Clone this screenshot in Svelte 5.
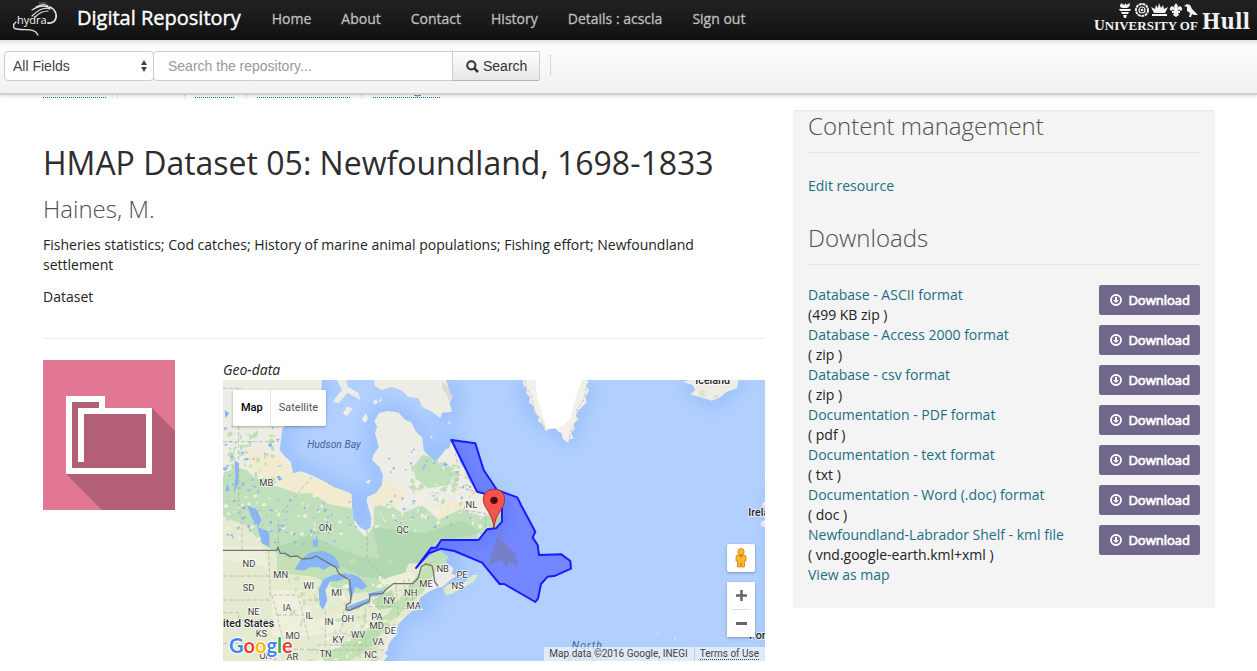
<script>
  const navItems = ['Home', 'About', 'Contact', 'History', 'Details : acscla', 'Sign out'];

  const downloads = [
    { name: 'Database - ASCII format', info: '(499 KB zip )' },
    { name: 'Database - Access 2000 format', info: '( zip )' },
    { name: 'Database - csv format', info: '( zip )' },
    { name: 'Documentation - PDF format', info: '( pdf )' },
    { name: 'Documentation - text format', info: '( txt )' },
    { name: 'Documentation - Word (.doc) format', info: '( doc )' },
    { name: 'Newfoundland-Labrador Shelf - kml file', info: '( vnd.google-earth.kml+xml )', map: true }
  ];

  const regions = [
    ['MB', 133, 379], ['NL', 748, 445], ['ON', 310, 514], ['QC', 542, 520],
    ['ND', 81, 622], ['MN', 176, 653], ['SD', 80, 694], ['WI', 260, 688],
    ['NE', 95, 764], ['IA', 195, 752], ['IL', 262, 776], ['MI', 344, 709],
    ['IN', 321, 794], ['OH', 377, 785], ['KS', 118, 832], ['MO', 212, 836],
    ['KY', 349, 848], ['WV', 408, 833], ['PA', 465, 779], ['MD', 464, 806],
    ['DE', 505, 821], ['VA', 468, 854], ['NC', 446, 893], ['TN', 311, 890],
    ['NY', 502, 731], ['NH', 566, 709], ['MA', 575, 746], ['ME', 612, 682],
    ['NB', 662, 635], ['PE', 720, 653], ['NS', 707, 688], ['OK', 130, 898], ['AR', 211, 899]
  ];

  // Small terrain flecks, scattered with a fixed seed so the map is stable.
  let seed = 41;
  const rnd = () => {
    seed = (seed * 16807) % 2147483647;
    return seed / 2147483647;
  };
  function flecks(count, x0, y0, w, h, size) {
    let d = '';
    for (let i = 0; i < count; i++) {
      const x = Math.round(x0 + rnd() * w);
      const y = Math.round(y0 + rnd() * h);
      const a = Math.round(3 + rnd() * size);
      const b = Math.round(2 + rnd() * size * 0.7);
      const c = Math.round(rnd() * a);
      d += `M${x} ${y}l${a} ${-c / 2}l${c} ${b}l${-a} ${b}l${-c} ${-b / 2}z`;
    }
    return d;
  }
  const lakes = flecks(65, 3, 190, 170, 340, 5) + flecks(35, 150, 400, 250, 160, 4) + flecks(40, 480, 250, 300, 250, 4);
  const tundra = flecks(90, 3, 400, 790, 135, 7);
  const forest = flecks(55, 3, 210, 150, 160, 11) + flecks(45, 560, 300, 170, 130, 14);
  const fields = flecks(80, 150, 640, 400, 260, 10);
  const woods = flecks(70, 180, 600, 360, 300, 12);
  const snow = flecks(45, 560, 370, 220, 90, 11);

  const land =
    'M3 60H300L298 90L250 150L200 190L181 205L173 270L188 288L206 305L213 340L238 334L275 348L310 366L335 382L370 394L388 402L390 440L393 475L412 500L430 511L446 503L448 475L441 448L434 425L436 410L462 400L480 376L483 345L472 320L450 300L454 284L470 262L465 240L459 218L465 200L457 182L472 158L500 153L530 158L550 180L568 187L580 212L602 235L605 272L621 287L640 306L661 282L670 268L682 263L688 242L705 275L715 310L731 330L740 360L766 396L800 399L822 415L839 440L842 480L824 500L795 510L770 535L660 538L630 563L582 622L618 594L650 570L678 590L670 606L694 624L689 641L706 648L688 658L662 680L646 683L620 695L594 713L586 735L604 748L570 752L540 780L527 794L523 826L510 838L500 852L496 872L487 878L498 888L484 903H3Z';
</script>

<div class="topbar">
  <a class="hydra" href="#hydra" aria-label="hydra">
    <svg viewBox="0 0 46 36" width="46" height="36">
      <g fill="none" stroke="#e4e4e4" stroke-linecap="round">
        <path d="M38 5C47 9 46 22 36 21" stroke-width="1.8" />
        <path d="M20 8C26 4 33 3 38 6M24 5C29 2 33 2 36 4M20 14C26 8 33 5 38 7M23 15C28 10 32 9 36 9" stroke-width="1.2" />
        <path d="M27 1H34" stroke-width=".8" stroke="#888" />
        <path d="M4 20C1 22 0 27 5 27C13 29 22 25 26 33" stroke-width="1.3" />
      </g>
      <text x="5" y="22" font-size="11" fill="#f3f3f3">hydra</text>
    </svg>
  </a>
  <a class="brand" href="#top">Digital Repository</a>
  <nav aria-label="Main">
    {#each navItems as item}
      <a href="#nav">{item}</a>
    {/each}
  </nav>
  <a class="hull" href="#hull">
    <span class="uni">
      <svg viewBox="0 0 80 15" width="80" height="15" fill="#f2f2f2">
        <path d="M1 6H13L12 8H2ZM3 9H11L10 11H4ZM5 12H9L8 15H6ZM4 5C0 3 3 2 3 0L6 2L8 0L8 2L12 0C11 3 13 3 9 5Z" />
        <g fill="none" stroke="#f2f2f2">
          <circle cx="24" cy="7" r="6" stroke-width="2" stroke-dasharray="2.8 .7" />
          <circle cx="24" cy="7" r="3" stroke-width="1.2" />
        </g>
        <circle cx="24" cy="7" r="1.3" />
        <path d="M33 4L37 6L38 2L40 5L41 0L43 5L45 2L46 6L50 4L47 10H36ZM34 11H49V13H34Z" />
        <path d="M58 0L60 3L59 6C61 1 65 4 64 7L62 8L61 6L60 8H62V10H60L61 12L58 14L55 12L56 10H54V8H56L55 6L54 8L52 7C51 4 55 1 57 6L56 3Z" />
        <path d="M66 3L69 1L72 2L74 6L80 12H76L74 11L73 14H71L72 10L69 8L69 4Z" />
      </svg>
      <span class="caps">U<small>NIVERSITY OF</small></span>
    </span>
    <strong>Hull</strong>
  </a>
</div>

<form class="searchbar" onsubmit={(e) => e.preventDefault()}>
  <div class="pick">
    <select aria-label="Search field"><option>All Fields</option></select>
    <svg viewBox="0 0 6 12" width="6" height="12" fill="#444"><path d="M3 0L6 5H0ZM3 12L0 7H6Z" /></svg>
  </div>
  <input type="text" aria-label="Search the repository" placeholder="Search the repository..." />
  <button class="go" type="submit">
    <svg viewBox="0 0 13 13" width="13" height="13" fill="none" stroke="#333"><circle cx="5.3" cy="5.3" r="4.1" stroke-width="2" /><path d="M8.3 8.3L12 12" stroke-width="2.5" /></svg>
    Search
  </button>
  <span class="tick"></span>
</form>

<div class="crumbs">
  <svg viewBox="0 0 400 4" width="400" height="4" fill="none">
    <g stroke="#1b6e83" stroke-dasharray="1 1">
      <path d="M0 2.5H63M152 2.5H191M214 2.5H307M330 2.5H397" />
    </g>
    <path d="M74.5 0V3M141.5 0V3M203.5 0V3M318.5 0V3" stroke="#bbb" stroke-dasharray="1 1" />
    <path d="M371 0Q374.5 2 378 0" stroke="#1b7c93" />
  </svg>
</div>

<main>
  <article>
    <h1>HMAP Dataset 05: Newfoundland, 1698-1833</h1>
    <h2>Haines, M.</h2>
    <p>Fisheries statistics; Cod catches; History of marine animal populations; Fishing effort; Newfoundland settlement</p>
    <p>Dataset</p>
    <hr />
    <div class="media">
      <svg class="thumb" viewBox="0 0 132 150" width="132" height="150">
        <path fill="#e27794" d="M0 0H132V150H0Z" />
        <path fill="#b35f76" d="M109 48L132 71V150H59L23 114V36H62V48Z" />
        <path fill="#fff" fill-rule="evenodd" d="M23 36H62V48H109V114H23ZM29 42V108H103V54H41V102H35V48H56V42Z" />
      </svg>
      <figure>
        <figcaption>Geo-data</figcaption>
        <div class="map">
          <svg class="terrain" viewBox="3 60 1626 843" preserveAspectRatio="xMidYMid slice">
            <defs>
              <clipPath id="land"><path d={land} /></clipPath>
              <filter id="soft" x="-20%" y="-20%" width="140%" height="140%"><feGaussianBlur stdDeviation="26" /></filter>
            </defs>
            <path fill="#b1d0ff" d="M3 60H1629V903H3Z" />
            <g fill="none" stroke="#8ab4f8" stroke-width="46" opacity=".65" filter="url(#soft)">
              <path d={land} />
              <path d="M900 60L935 160L1040 230L1100 60M1390 60L1470 120L1560 60M690 60L690 150L640 180M1660 380V903" />
            </g>

            <g clip-path="url(#land)">
              <path fill="#eeede5" d="M3 60H900V903H3Z" />
              <path fill="#f2ebcf" d="M70 262L120 275L180 290L215 340L300 362L390 398V445L280 430L160 370L90 330ZM450 395L500 360L520 385L550 390L540 430L450 440ZM740 380L790 400L780 420L735 400ZM640 440L740 410L760 430L650 480Z" />
              <path fill="#c0e0bb" d="M3 345L40 320L75 330L110 365L170 380L225 400L270 400L320 432L390 445L400 500L430 530L455 500V440L500 430L540 460L600 435L650 480L720 445L780 470L850 440V540L600 640L520 720L460 903H3Z" />
              <path fill="#b2d8b1" d="M170 560L260 525L350 565L420 590L600 610L520 665L420 650L360 620L280 600L200 610ZM450 500L610 520L720 480L780 520L640 545L580 620L480 620Z" />
              <path fill="#c0e0bb" d="M575 320L600 285L640 290L665 330L700 335L680 375L620 385L580 355Z" />
              <path fill="#e4ebd0" d="M3 470L70 495L120 550L165 580L175 640L280 650L330 680L400 700L500 690L540 660L560 610L620 610L600 780L500 810L480 903H3Z" />
              <path fill="#eef0db" d="M150 690L240 690L280 780L360 760L350 820L150 830ZM470 660L560 635L590 655L500 690ZM3 560L120 560L140 620L3 600Z" />
              <path fill="#c4e1b4" d="M165 590L260 590L290 650L220 640L165 640ZM300 880L380 840L440 800L500 760L560 680L620 600L650 620L600 700L500 790L440 870L380 903H300Z" />
              <path fill="#b8dcae" d="M400 850L480 780L470 830L410 880ZM450 720L510 690L525 740L470 750Z" />
              <path fill="#bfe0b7" d={forest} />
              <path fill="#eeefe1" d={tundra} />
              <path fill="#f1efe6" d={snow} />
              <path fill="#f0f2df" d={fields} />
              <path fill="#c2e0b3" opacity=".8" d={woods} />
              <path fill="#8ab4f8" d={lakes} />
              <path fill="#8ab4f8" d="M38 300L50 310V370L36 400L40 350ZM75 435L105 450L118 480L110 500L90 475ZM106 500L142 515V562L120 550ZM15 370L23 390L12 396ZM272 540L288 538V560H273ZM8 150L22 160L10 175Z" />
              <path fill="#8ab4f8" d="M218 628L236 600L262 578L300 572L330 584L346 600L355 628L345 624L325 618L305 630L290 622L266 622L245 632ZM290 690L302 660L330 646L372 640L388 652L362 658L345 664L325 664L310 690L316 720L303 750L293 735ZM380 640L410 650L436 678L420 690L400 680L388 720L378 690L384 665ZM372 742L400 730L440 715V725L410 745L380 754ZM438 700L485 690L480 705L442 712Z" />
            </g>

            <g fill="#eeede5">
              <path d="M345 60L360 90L332 125L350 130L377 98L415 120L410 100L378 80L372 60ZM362 160L376 140L393 145L375 168ZM420 175L432 160L438 174L432 188L423 184ZM452 125L462 118L468 126L458 134ZM470 125L480 110L478 125ZM458 78L480 90L510 80L540 92L558 110L590 115L600 140L630 155L655 175L660 158L690 155L683 130L690 110L680 85L672 60H457ZM676 186L686 185L684 194ZM624 230L632 226L630 236ZM430 365L448 358L440 372Z" />
              <path fill="#ccc" d="M660 65L685 88L688 105L682 125L672 100L662 90Z" opacity=".6" />
            </g>
            <path fill="#dcebcf" d="M664 685L680 672L720 674L752 645L768 645L755 665L690 702L670 706ZM700 638L735 645L725 650L705 648Z" />
            <path fill="#f2f0ea" d="M902 60L906 80L914 84L912 98L924 112L922 128L935 138L938 158L950 170L948 184L962 192L970 213L986 206L1000 205L1010 216L1018 218L1022 236L1040 250L1042 238L1055 235L1048 220L1058 206L1056 190L1070 180L1062 166L1070 150L1078 144L1094 125L1090 112L1102 90L1092 80L1100 66L1095 60Z" />
            <path fill="#fff" d="M940 60L945 110L960 160L975 205L1005 205L1025 195L1045 175L1060 115L1080 60Z" />
            <path fill="none" stroke="#bfbfb8" stroke-width="4" stroke-dasharray="5 4 2 6" d="M908 60L915 90L930 110L936 150L960 185L970 212M1096 70L1085 120L1064 150L1066 182L1048 210L1040 245" />
            <path fill="#eeede5" d="M1384 66L1400 60H1550L1545 85L1515 95L1495 112L1470 122L1435 112L1404 103L1420 90L1412 75Z" />
            <path fill="#d6e8c4" d="M1430 90L1450 92L1450 112L1430 105ZM1470 112L1490 100L1486 115Z" />
            <path fill="#eeede5" d="M1629 425L1620 430L1622 440H1629ZM1629 480L1615 488L1620 500H1629Z" />
            <path fill="#f4f6d8" d="M1305 819h6v3h-6zM1356 834h6v3h-6z" />

            <g fill="none" stroke="#a9ada5" stroke-width="2" stroke-dasharray="12 6">
              <path d="M3 85H60M50 198V435L60 480V570M3 245H172M270 350L190 445L168 480V565M435 510V600L500 665M3 648H145M3 720H145M140 570L145 705H228M3 758H50V780H158M150 705L165 765L180 825M165 765H240M180 825L170 868H290M228 705L240 750L260 840M240 720H295M310 752V850M365 752L362 800L330 850M365 750H380M440 740H515M430 742V790L400 830L360 820M440 795H520M285 855H490M260 870H485M520 665L525 720L530 765M545 660L555 735M560 655L575 730M760 395L735 420L725 450L790 460V505M700 280L710 330L705 380L760 395" />
              <path d="M620 610L640 605L655 620M545 745H590M3 850H160V903" />
            </g>
            <path fill="none" stroke="#707570" stroke-width="4" stroke-linejoin="round" d="M3 571H165L168 562L175 580L190 580L205 590L225 588L240 597L268 595L282 588L342 622L350 640L382 660L388 700L385 728L373 735L372 748L380 752L442 725L444 704L483 700L490 690L514 671H572L588 655L598 620L610 612L630 617L635 640L638 665L648 678" />

            <g class="state">
              {#each regions as [label, x, y]}
                <text {x} {y}>{label}</text>
              {/each}
            </g>
            <text class="water" x="336" y="265">Hudson Bay</text>
            <text class="water ocean" x="1096" y="868">North</text>
            <text class="water ocean pale" x="1098" y="908">Atlantic</text>
            <text class="country" x="3" y="801">ited States</text>
            <text class="country" x="1420" y="71">Iceland</text>
            <text class="country" x="1579" y="468">Ireland</text>
            <text class="country" x="1581" y="838">Portugal</text>

            <path fill="#b5d0b0" d="M804 510L825 480L842 440L838 485L822 505Z" />
            <path fill="#b5c3ad" d="M804 618L806 590L812 570L820 545L834 510L842 502L832 540L850 550L862 565L884 585L878 592L888 604L885 630L878 612L868 612L860 605L856 622L846 615L838 602L820 606Z" />
            <path
              fill="#0000ff" fill-opacity=".35" stroke="#1a1aff" stroke-width="6" stroke-linejoin="round"
              d="M688 240L760 250L785 330L825 390L886 412L897 435L940 515L932 533L947 555L951 585L1018 583L1045 603L1047 626L1000 647L977 650L957 672L948 716L940 726L847 672H833L780 608L697 573L658 566L620 580L582 624L628 563H643L658 540H770L795 508L822 505L840 485V430L825 410L765 395Z"
            />
            <path fill="#f5544d" stroke="#a92f2b" stroke-width="3" d="M816 504C813 475 802 460 793 445C776 420 783 388 816 388C849 388 856 420 839 445C830 460 819 475 816 504Z" />
            <circle cx="816" cy="421" r="11" fill="#4c0d0b" />

            <g class="google">
              <text x="21" y="880"><tspan fill="#4285f4">G</tspan><tspan fill="#ea4335">o</tspan><tspan fill="#fbbc05">o</tspan><tspan fill="#4285f4">g</tspan><tspan fill="#34a853">l</tspan><tspan fill="#ea4335">e</tspan></text>
            </g>
          </svg>

          <div class="kind">
            <button class="on" type="button">Map</button>
            <button type="button">Satellite</button>
          </div>
          <div class="tools">
            <button class="peg" type="button" aria-label="Street View">
              <svg viewBox="0 0 12 20" width="12" height="20" fill="#fbb829" stroke="#c98216" stroke-width=".8">
                <path d="M3 7H9Q11 7 11 9V13H9.500V19H6.500V15H5.500V19H2.500V13H1V9Q1 7 3 7Z" />
                <circle cx="6" cy="3.800" r="3.200" /><path fill="#e8711c" stroke="none" d="M4 7.500H8L6 10Z" />
              </svg>
            </button>
            <div class="zoom">
              <button type="button" aria-label="Zoom in"><svg viewBox="0 0 11 11" width="11" height="11"><path stroke="#666" stroke-width="2.5" d="M0 5.500H11M5.500 0V11" /></svg></button>
              <i></i>
              <button type="button" aria-label="Zoom out"><svg viewBox="0 0 11 11" width="11" height="11"><path stroke="#666" stroke-width="3" d="M0 5.500H11" /></svg></button>
            </div>
          </div>
          <div class="credit"><span>Map data ©2016 Google, INEGI</span><span><a href="#terms">Terms of Use</a></span></div>
        </div>
      </figure>
    </div>
  </article>

  <aside>
    <h2>Content management</h2>
    <p><a href="#edit">Edit resource</a></p>
    <h2>Downloads</h2>
    <ul>
      {#each downloads as file}
        <li>
          <div>
            <a href="#file">{file.name}</a><br />{file.info}
            {#if file.map}<br /><a href="#map">View as map</a>{/if}
          </div>
          <button class="download" type="button">
            <svg viewBox="0 0 12 12" width="12" height="12"><circle cx="6" cy="6" r="5" fill="none" stroke="#fff" stroke-width="1.8" /><path fill="#fff" d="M5 3H7V6H9L6 9L3 6H5Z" /></svg>
            <span>Download</span>
          </button>
        </li>
      {/each}
    </ul>
  </aside>
</main>

<style>
  :global(body) {
    margin: 0;
    background: #fff;
    color: #222;
    font: 14px/20px 'Open Sans', sans-serif;
  }
  a {
    color: #1b6e83;
    text-decoration: none;
  }
  svg {
    display: block;
    flex: none;
  }

  .topbar {
    display: flex;
    align-items: center;
    height: 40px;
    padding: 0 7px 0 12px;
    background: linear-gradient(#222, #111);
    box-sizing: border-box;
  }
  .hydra text {
    font-family: 'Open Sans', sans-serif;
  }
  .brand {
    margin: 0 16px 4px 19px;
    color: #fff;
    font-size: 20px;
    -webkit-text-stroke: 0.4px #fff;
  }
  nav {
    display: flex;
    flex: 1;
  }
  nav a {
    padding: 0 15px 2px;
    color: #bfbfbf;
    -webkit-text-stroke: 0.3px #bfbfbf;
  }
  .hull {
    display: flex;
    align-items: flex-end;
    align-self: flex-start;
    gap: 4px;
    padding-top: 3px;
    color: #f2f2f2;
    font-family: 'DejaVu Serif Condensed', 'DejaVu Serif', serif;
  }
  .uni {
    display: flex;
    flex-direction: column;
    align-items: flex-end;
  }
  .caps {
    font: bold 15px/14px 'Liberation Serif', serif;
  }
  .caps small {
    font-size: 13px;
  }
  .hull strong {
    font-size: 22px;
    line-height: 24px;
  }

  .searchbar {
    position: relative;
    display: flex;
    align-items: flex-start;
    height: 55px;
    padding: 11px 4px 0;
    border-bottom: 2px solid #d0d0d0;
    background: linear-gradient(#e4e4e4, #fdfdfd 6px, #f1f1f1);
    box-shadow: 0 1px 4px rgba(0, 0, 0, 0.15);
    box-sizing: border-box;
  }
  .searchbar select,
  .searchbar input,
  .go {
    height: 30px;
    margin: 0;
    border: 1px solid #ccc;
    background: #fff;
    color: #444;
    font: 14px/20px 'Liberation Sans', Arial, sans-serif;
    box-sizing: border-box;
  }
  .pick {
    position: relative;
  }
  .pick select {
    display: block;
    width: 150px;
    padding: 0 8px;
    border-radius: 4px;
    appearance: none;
  }
  .pick svg {
    position: absolute;
    top: 9px;
    right: 7px;
    pointer-events: none;
  }
  .searchbar input {
    width: 300px;
    margin-left: -1px;
    padding: 0 14px;
    border-radius: 4px 0 0 4px;
  }
  .searchbar input::placeholder {
    color: #999;
    opacity: 1;
  }
  .searchbar .go {
    display: flex;
    align-items: center;
    gap: 4px;
    width: 88px;
    margin-left: -1px;
    padding: 0 13px;
    border-color: #ccc #ccc #b3b3b3;
    border-radius: 0 2px 2px 0;
    background: linear-gradient(#fff, #e6e6e6);
    color: #333;
  }
  .tick {
    height: 20px;
    margin: 4px 0 0 10px;
    border-left: 1px dotted #bbb;
  }
  .crumbs {
    position: relative;
    height: 15px;
    padding-left: 43px;
  }

  main {
    display: grid;
    grid-template-columns: 722fr 422fr;
    gap: 28px;
    align-items: start;
    padding: 0 42px 10px 43px;
  }
  h1,
  h2 {
    margin: 0;
    font-weight: 400;
  }
  h1 {
    padding-top: 33px;
    color: #2d2d2d;
    font-size: 32px;
    line-height: 40px;
  }
  h2 {
    color: #505050;
    font-size: 24px;
    font-weight: 300;
    line-height: 32px;
  }
  article h2 {
    margin: 10px 0;
  }
  article p {
    margin: 0 0 12px;
  }
  hr {
    margin: 31px 0 21px;
    border: 0;
    border-top: 1px solid #eee;
  }
  .media {
    display: flex;
    align-items: flex-start;
    gap: 48px;
  }
  figure {
    flex: 1;
    min-width: 0;
    margin: 0;
  }
  figcaption {
    font-style: italic;
  }

  .map {
    position: relative;
    height: 281px;
    overflow: hidden;
    font: 11px/14px Roboto, sans-serif;
  }
  .terrain {
    width: 100%;
    height: 100%;
  }
  .terrain text {
    font-family: Roboto, sans-serif;
  }
  .state text {
    fill: #3c3c3c;
    font-size: 28px;
    text-anchor: middle;
    paint-order: stroke;
    stroke: rgba(255, 255, 255, 0.75);
    stroke-width: 5px;
  }
  .terrain .water {
    fill: #45639a;
    font-size: 31px;
    font-style: italic;
    text-anchor: middle;
  }
  .terrain .ocean {
    font-size: 32px;
    letter-spacing: 3px;
  }
  .terrain .pale {
    opacity: 0.6;
  }
  .terrain .country {
    fill: #222;
    font-size: 32px;
    font-weight: 500;
    paint-order: stroke;
    stroke: rgba(255, 255, 255, 0.75);
    stroke-width: 5px;
  }
  .terrain .google text {
    font-family: Lato, sans-serif;
    font-size: 60px;
    font-weight: 700;
    paint-order: stroke;
    stroke: #fff;
    stroke-width: 6px;
  }
  .map button {
    display: flex;
    align-items: center;
    justify-content: center;
    padding: 0;
    border: 0;
    background: #fff;
    color: #555;
    font: inherit;
  }
  .kind {
    position: absolute;
    top: 10px;
    left: 10px;
    display: flex;
    border-radius: 2px;
    background: #fff;
    box-shadow: 0 1px 3px rgba(0, 0, 0, 0.3);
    overflow: hidden;
  }
  .map .kind button {
    height: 36px;
    padding: 0 8px;
  }
  .map .kind .on {
    padding-right: 7px;
    border-right: 1px solid #e6e6e6;
    color: #000;
    font-weight: 500;
  }
  .tools {
    position: absolute;
    right: 10px;
    bottom: 24px;
    display: flex;
    flex-direction: column;
    gap: 10px;
  }
  .map .peg,
  .zoom {
    width: 28px;
    border-radius: 2px;
    background: #fff;
    box-shadow: 0 1px 3px rgba(0, 0, 0, 0.3);
  }
  .map .peg {
    height: 28px;
  }
  .zoom button {
    width: 28px;
    height: 27px;
  }
  .zoom i {
    display: block;
    height: 1px;
    margin: 0 5px;
    background: #e0e0e0;
  }
  .credit {
    position: absolute;
    right: 0;
    bottom: 0;
    display: flex;
    gap: 1px;
    color: #444;
    font-size: 10px;
  }
  .credit span {
    padding: 0 6px 0 5px;
    background: rgba(245, 245, 245, 0.7);
    white-space: nowrap;
  }
  .credit a {
    border-bottom: 1px dotted #444;
    color: #444;
  }

  aside {
    padding: 0 15px 23px;
    border-radius: 2px;
    background: #f4f4f4;
    box-shadow: inset 0 1px 1px rgba(0, 0, 0, 0.05);
  }
  aside h2 {
    margin-bottom: 20px;
    padding-bottom: 10px;
    border-bottom: 1px solid #e3e3e3;
  }
  aside p {
    margin: 0 0 26px;
    padding-top: 3px;
  }
  ul {
    margin: 0;
    padding: 0;
    list-style: none;
  }
  li {
    display: flex;
    align-items: flex-start;
    justify-content: space-between;
  }
  .download {
    display: flex;
    flex: none;
    align-items: center;
    gap: 6px;
    height: 30px;
    padding: 0 10px 0 11px;
    border: 0;
    border-radius: 2px;
    background: #71678a;
    color: #fff;
    font: 13px/20px 'Open Sans', sans-serif;
    -webkit-text-stroke: 0.7px #fff;
  }
</style>
